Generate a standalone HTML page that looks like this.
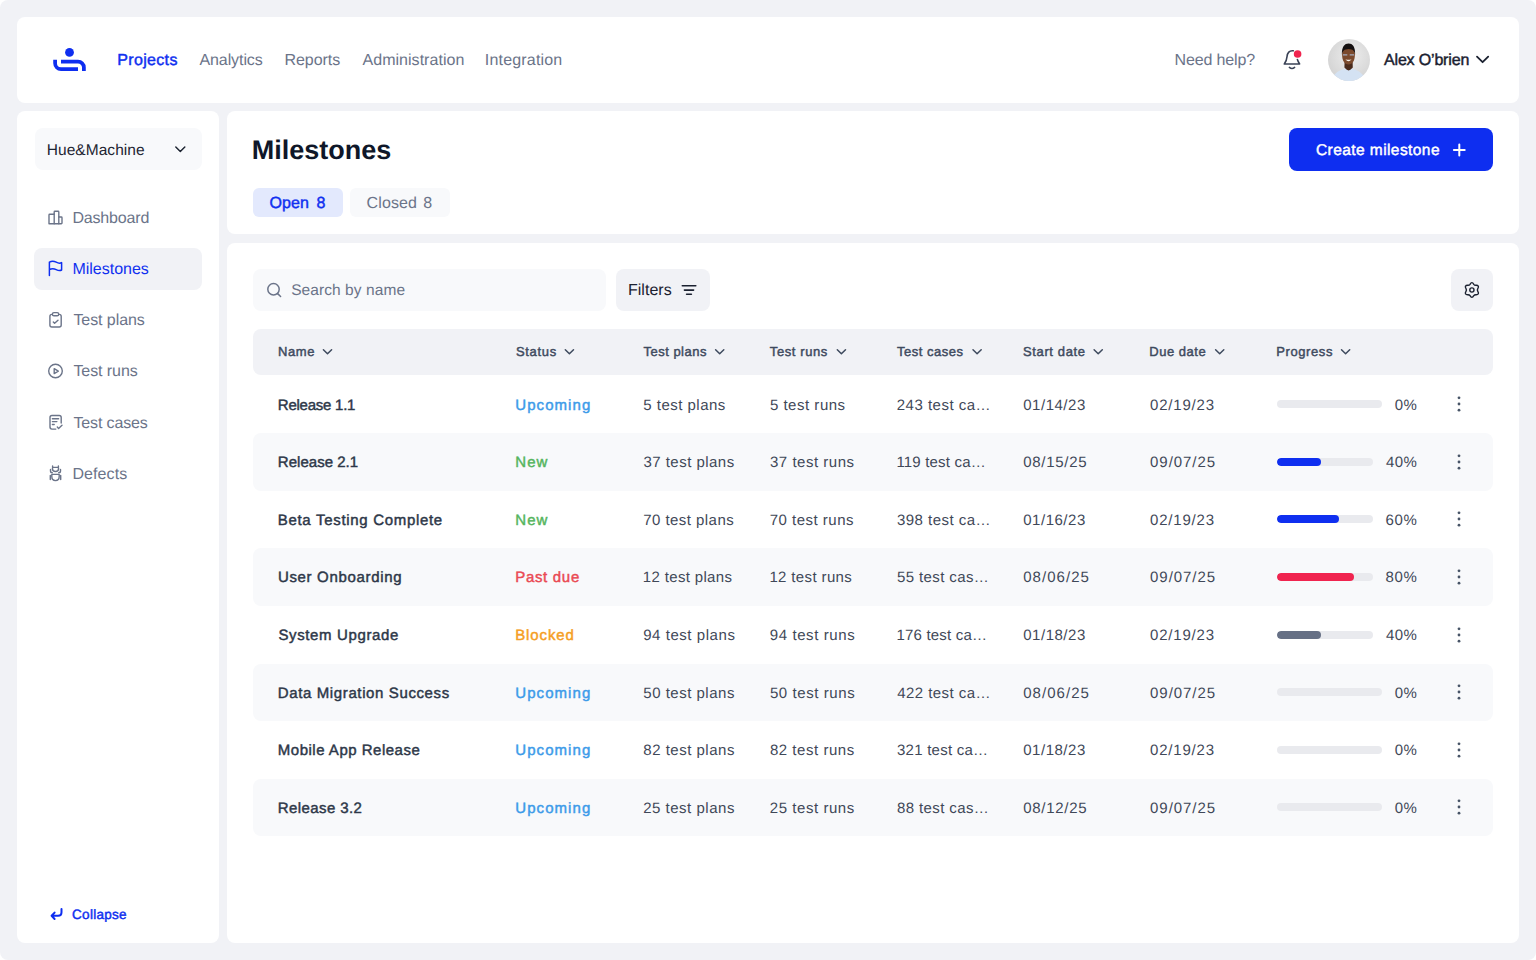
<!DOCTYPE html>
<html><head><meta charset="utf-8">
<style>
html,body{margin:0;padding:0;background:#ffffff;}
body{width:1536px;height:960px;position:relative;overflow:hidden;font-family:"Liberation Sans",sans-serif;}
.page{position:absolute;left:0;top:0;width:1536px;height:960px;background:#f1f2f6;border-radius:8px;overflow:hidden;}
.card{position:absolute;background:#ffffff;border-radius:8px;}
.t{position:absolute;white-space:pre;line-height:1;text-rendering:geometricPrecision;}
.box{position:absolute;border-radius:8px;}
.stripe{position:absolute;left:253px;width:1240px;height:57.6px;background:#f8f9fb;border-radius:8px;}
.track{position:absolute;left:1277.2px;height:8px;background:#e9eaee;border-radius:4px;overflow:hidden;}
.fill{height:8px;border-radius:4px;}
.kebab{position:absolute;left:1449.2px;fill:#475467;}
svg.ic{position:absolute;overflow:visible;}
</style></head>
<body>
<div class="page">
  <!-- header -->
  <div class="card" style="left:17px;top:17px;width:1502px;height:85.5px;"></div>
  <!-- sidebar -->
  <div class="card" style="left:17px;top:111px;width:201.7px;height:832px;"></div>
  <!-- main header -->
  <div class="card" style="left:226.7px;top:111px;width:1292.3px;height:123.4px;"></div>
  <!-- table card -->
  <div class="card" style="left:226.7px;top:243px;width:1292.3px;height:700px;"></div>

  <!-- project select -->
  <div class="box" style="left:34.7px;top:128.3px;width:167px;height:41.8px;background:#f8f9fb;"></div>
  <!-- selected nav -->
  <div class="box" style="left:34.3px;top:247.7px;width:167.4px;height:42.3px;background:#f1f2f6;"></div>
  <!-- tabs -->
  <div class="box" style="left:252.9px;top:187.9px;width:90.2px;height:29px;background:#e3e9fd;border-radius:6px;"></div>
  <div class="box" style="left:350.3px;top:187.9px;width:99.8px;height:29px;background:#f8f9fb;border-radius:6px;"></div>
  <!-- create button -->
  <div class="box" style="left:1288.7px;top:128.3px;width:204.1px;height:42.4px;background:#0e2ef0;"></div>
  <!-- search -->
  <div class="box" style="left:253px;top:268.9px;width:353.2px;height:42px;background:#f8f9fb;"></div>
  <!-- filters -->
  <div class="box" style="left:616.1px;top:269.3px;width:93.8px;height:41.5px;background:#f1f2f6;"></div>
  <!-- gear btn -->
  <div class="box" style="left:1451.3px;top:269px;width:41.7px;height:41.9px;background:#f1f2f6;"></div>
  <!-- table header -->
  <div class="box" style="left:253px;top:328.6px;width:1239.7px;height:46.2px;background:#f1f2f6;"></div>

<div class="track" style="top:400.20px;width:104.8px"></div>
<svg class="kebab" style="top:394.20px" width="20" height="20" viewBox="0 0 20 20"><circle cx="10" cy="3.8" r="1.4"/><circle cx="10" cy="10" r="1.4"/><circle cx="10" cy="16.2" r="1.4"/></svg>
<div class="stripe" style="top:433.20px"></div>
<div class="track" style="top:457.80px;width:96px"><div class="fill" style="width:43.6px;background:#0f2ff0"></div></div>
<svg class="kebab" style="top:451.80px" width="20" height="20" viewBox="0 0 20 20"><circle cx="10" cy="3.8" r="1.4"/><circle cx="10" cy="10" r="1.4"/><circle cx="10" cy="16.2" r="1.4"/></svg>
<div class="track" style="top:515.40px;width:96px"><div class="fill" style="width:61.6px;background:#0f2ff0"></div></div>
<svg class="kebab" style="top:509.40px" width="20" height="20" viewBox="0 0 20 20"><circle cx="10" cy="3.8" r="1.4"/><circle cx="10" cy="10" r="1.4"/><circle cx="10" cy="16.2" r="1.4"/></svg>
<div class="stripe" style="top:548.40px"></div>
<div class="track" style="top:573.00px;width:96px"><div class="fill" style="width:76.4px;background:#f0244f"></div></div>
<svg class="kebab" style="top:567.00px" width="20" height="20" viewBox="0 0 20 20"><circle cx="10" cy="3.8" r="1.4"/><circle cx="10" cy="10" r="1.4"/><circle cx="10" cy="16.2" r="1.4"/></svg>
<div class="track" style="top:630.60px;width:96px"><div class="fill" style="width:43.6px;background:#667085"></div></div>
<svg class="kebab" style="top:624.60px" width="20" height="20" viewBox="0 0 20 20"><circle cx="10" cy="3.8" r="1.4"/><circle cx="10" cy="10" r="1.4"/><circle cx="10" cy="16.2" r="1.4"/></svg>
<div class="stripe" style="top:663.60px"></div>
<div class="track" style="top:688.20px;width:104.8px"></div>
<svg class="kebab" style="top:682.20px" width="20" height="20" viewBox="0 0 20 20"><circle cx="10" cy="3.8" r="1.4"/><circle cx="10" cy="10" r="1.4"/><circle cx="10" cy="16.2" r="1.4"/></svg>
<div class="track" style="top:745.80px;width:104.8px"></div>
<svg class="kebab" style="top:739.80px" width="20" height="20" viewBox="0 0 20 20"><circle cx="10" cy="3.8" r="1.4"/><circle cx="10" cy="10" r="1.4"/><circle cx="10" cy="16.2" r="1.4"/></svg>
<div class="stripe" style="top:778.80px"></div>
<div class="track" style="top:803.40px;width:104.8px"></div>
<svg class="kebab" style="top:797.40px" width="20" height="20" viewBox="0 0 20 20"><circle cx="10" cy="3.8" r="1.4"/><circle cx="10" cy="10" r="1.4"/><circle cx="10" cy="16.2" r="1.4"/></svg>

<svg class="ic" style="left:0;top:0" width="1536" height="960" viewBox="0 0 1536 960" fill="none" stroke-linecap="round" stroke-linejoin="round">
  <!-- logo -->
  <g stroke="#0e2ef0" stroke-width="3.75" stroke-linecap="butt" stroke-linejoin="miter">
    <path d="M55.1,59.75 V63.2 A5.9,5.9 0 0 0 61,69.1 H78"/>
    <path d="M61,61.6 H78 A5.9,5.9 0 0 1 83.9,67.5 V71"/>
  </g>
  <circle cx="69.5" cy="52.4" r="4.4" fill="#0e2ef0"/>
  <!-- bell -->
  <g stroke="#3a4256" stroke-width="1.6">
    <path d="M1293.3,50.8 C1289.3,50.2 1287.3,53 1287,56.8 C1286.7,60.6 1285.6,62.3 1284.3,64 H1299.6 C1298.7,62.6 1297.9,61.2 1297.4,59.5"/>
    <path d="M1289.4,67.4 Q1292,69.6 1294.6,67.4"/>
  </g>
  <circle cx="1297.6" cy="54" r="3.8" fill="#f0244f"/>
  <!-- user chevron -->
  <path d="M1477,56.6 L1482.6,62.2 L1488.2,56.6" stroke="#1b2130" stroke-width="1.8"/>
  <!-- project chevron -->
  <path d="M175.8,147 L180.3,151.5 L184.8,147" stroke="#1f2633" stroke-width="1.5"/>
  <!-- sidebar icons -->
  <g stroke="#6b7489" stroke-width="1.4">
    <!-- dashboard -->
    <path d="M49,223.8 V215 Q49,214.3 49.7,214.3 H54.2 V212 Q54.2,211.3 54.9,211.3 H58.1 Q58.8,211.3 58.8,212 V217 H61.3 Q62,217 62,217.7 V223.1 Q62,223.8 61.3,223.8 H49.7 Q49,223.8 49,223.1 Z"/>
    <path d="M54.2,214.3 V223.8 M58.8,217 V223.8"/>
    <!-- clipboard -->
    <path d="M52.2,314.4 H51.9 C50.7,314.4 49.9,315.2 49.9,316.4 V325 C49.9,326.2 50.7,327 51.9,327 H59.2 C60.4,327 61.2,326.2 61.2,325 V316.4 C61.2,315.2 60.4,314.4 59.2,314.4 H58.9"/>
    <rect x="52.4" y="312.6" width="6.3" height="3.1" rx="1.55"/>
    <path d="M53.3,321.9 L54.6,323.3 L58,320.2"/>
    <!-- play -->
    <circle cx="55.5" cy="371" r="6.8"/>
    <path d="M54.2,368.6 L58.3,371.1 L54.2,373.6 Z"/>
    <!-- doc check -->
    <path d="M55.8,429.1 H52 C50.9,429.1 50,428.2 50,427.1 V417.5 C50,416.4 50.9,415.5 52,415.5 H59.2 C60.3,415.5 61.2,416.4 61.2,417.5 V423"/>
    <path d="M52.4,418.7 H58.6 M52.4,421.6 H56.9 M52.4,424.5 H54.2"/>
    <path d="M57.3,427.1 L58.6,428.4 L62,425.3"/>
    <!-- bug -->
    <path d="M52.6,466 V467.4 M58.4,466 V467.4"/>
    <path d="M53.4,467.4 H57.6 C58.2,467.4 58.6,467.8 58.6,468.4 C58.6,470.2 57.2,471.5 55.5,471.5 C53.8,471.5 52.4,470.2 52.4,468.4 C52.4,467.8 52.8,467.4 53.4,467.4 Z"/>
    <path d="M50.5,469.4 V471 C50.5,472 51.3,472.8 52.3,472.8 M60.5,469.4 V471 C60.5,472 59.7,472.8 58.7,472.8"/>
    <path d="M51.8,474.4 H59.2 V476.6 C59.2,479 57.6,480.6 55.5,480.6 C53.4,480.6 51.8,479 51.8,476.6 Z"/>
    <path d="M50.3,475.4 V479.6 M60.7,475.4 V479.6"/>
  </g>
  <!-- flag (active) -->
  <path d="M49.4,275.4 V262.2 C52,260.6 54.3,261.2 56.2,262.2 C58.1,263.2 60,263.6 61.6,262.6 V270 C60,271 58.1,270.6 56.2,269.6 C54.3,268.6 52,268.1 49.4,269.6" stroke="#0e2ef0" stroke-width="1.5"/>
  <!-- collapse -->
  <path d="M61.5,909 V912.3 C61.5,914.3 60,915.8 58,915.8 H52 M54.6,912.6 L51.6,915.8 L54.6,919" stroke="#0e2ef0" stroke-width="2"/>
  <!-- plus -->
  <path d="M1459.3,144.6 V155.4 M1453.9,150 H1464.7" stroke="#ffffff" stroke-width="2"/>
  <!-- search -->
  <circle cx="273.5" cy="289.3" r="5.7" stroke="#6b7489" stroke-width="1.5"/>
  <path d="M277.7,293.6 L280.6,296.5" stroke="#6b7489" stroke-width="1.5"/>
  <!-- filter -->
  <path d="M682.3,285.8 H695.8 M684.4,290.1 H693.6 M686.6,294.2 H691.4" stroke="#1b2130" stroke-width="1.6"/>
  <!-- gear -->
  <g stroke="#1b2130" stroke-width="1.4">
    <path d="M1471.9,282.6 C1472.8,282.6 1473.3,283.4 1473.8,284.3 C1474.3,285.1 1475.2,285.4 1476.2,285.3 C1477.2,285.3 1477.9,285.4 1478.3,286.2 C1478.8,287 1478.3,287.8 1477.8,288.6 C1477.3,289.4 1477.3,290.6 1477.8,291.4 C1478.3,292.2 1478.8,293 1478.3,293.8 C1477.9,294.6 1477.2,294.7 1476.2,294.7 C1475.2,294.6 1474.3,294.9 1473.8,295.7 C1473.3,296.6 1472.8,297.4 1471.9,297.4 C1471,297.4 1470.5,296.6 1470,295.7 C1469.5,294.9 1468.6,294.6 1467.6,294.7 C1466.6,294.7 1465.9,294.6 1465.5,293.8 C1465,293 1465.5,292.2 1466,291.4 C1466.5,290.6 1466.5,289.4 1466,288.6 C1465.5,287.8 1465,287 1465.5,286.2 C1465.9,285.4 1466.6,285.3 1467.6,285.3 C1468.6,285.4 1469.5,285.1 1470,284.3 C1470.5,283.4 1471,282.6 1471.9,282.6 Z"/>
    <circle cx="1471.9" cy="290" r="2.1"/>
  </g>
  <!-- header chevrons -->
  <g stroke="#3e4a5e" stroke-width="1.5">
    <path d="M323.4,349.7 L327.5,353.8 L331.6,349.7"/>
    <path d="M565.3,349.7 L569.4,353.8 L573.5,349.7"/>
    <path d="M715.6,349.7 L719.7,353.8 L723.8,349.7"/>
    <path d="M837.3,349.7 L841.4,353.8 L845.5,349.7"/>
    <path d="M973,349.7 L977.1,353.8 L981.2,349.7"/>
    <path d="M1094.1,349.7 L1098.2,353.8 L1102.3,349.7"/>
    <path d="M1215.6,349.7 L1219.7,353.8 L1223.8,349.7"/>
    <path d="M1341.5,349.7 L1345.6,353.8 L1349.7,349.7"/>
  </g>
</svg>
<!-- avatar -->
<svg class="ic" style="left:1328.4px;top:38.6px" width="42" height="42" viewBox="0 0 42 42">
  <defs>
    <radialGradient id="avbg" cx="55%" cy="40%" r="65%"><stop offset="0" stop-color="#ededed"/><stop offset="1" stop-color="#d2d2d2"/></radialGradient>
    <clipPath id="avc"><circle cx="21" cy="21" r="21"/></clipPath>
  </defs>
  <g clip-path="url(#avc)">
    <rect width="42" height="42" fill="url(#avbg)"/>
    <path d="M3,44 C4,36 9,32 16,30 C17.5,29.5 18.5,28.8 19,28 L20.6,31 L22.2,28 C22.8,28.8 23.8,29.5 25.2,30 C32,32 37,36 38,44 Z" fill="#d4e2f3"/>
    <path d="M16.6,23 L16.4,28.5 C17.8,30 19,31 20.6,31.5 C22.2,31 23.4,30 24.8,28.5 L24.6,23 Z" fill="#4a2a1b"/>
    <path d="M14.1,15.5 C14.1,10.5 16.8,8.6 20.5,8.6 C24.2,8.6 26.9,10.5 26.9,15.5 C26.9,21.8 24.5,25.4 20.5,25.4 C16.5,25.4 14.1,21.8 14.1,15.5 Z" fill="#7b4a2d"/>
    <path d="M13.9,15.8 C13.6,7.8 16.6,4.6 20.6,4.6 C24.6,4.6 27.4,7.8 27.1,15.8 C26.6,11.8 25,10.2 20.6,10 C16.2,10.2 14.5,11.8 13.9,15.8 Z" fill="#141010"/>
    <path d="M17.4,20.2 Q20.5,24.2 23.6,20.2 Q20.5,21.4 17.4,20.2 Z" fill="#f6f1ea"/>
    <path d="M15,15.9 H19.3 M21.7,15.9 H26" stroke="#a4acbf" stroke-width="1.3"/>
  </g>
</svg>


<span class="t" style="left:117.30px;top:53px;font-size:16px;color:#1030f0;-webkit-text-stroke:0.45px #1030f0;letter-spacing:0.329px;">Projects</span>
<span class="t" style="left:199.40px;top:53px;font-size:16px;color:#6b7489;letter-spacing:-0.078px;">Analytics</span>
<span class="t" style="left:284.50px;top:53px;font-size:16px;color:#6b7489;letter-spacing:-0.054px;">Reports</span>
<span class="t" style="left:362.50px;top:53px;font-size:16px;color:#6b7489;letter-spacing:0.033px;">Administration</span>
<span class="t" style="left:484.85px;top:53px;font-size:16px;color:#6b7489;letter-spacing:0.179px;">Integration</span>
<span class="t" style="left:1174.60px;top:53px;font-size:16px;color:#6b7489;letter-spacing:-0.138px;">Need help?</span>
<span class="t" style="left:1384.00px;top:53px;font-size:16px;color:#1b2130;-webkit-text-stroke:0.45px #1b2130;letter-spacing:-0.168px;">Alex O’brien</span>
<span class="t" style="left:46.70px;top:143px;font-size:15.5px;color:#1f2633;letter-spacing:0.063px;">Hue&amp;Machine</span>
<span class="t" style="left:72.40px;top:211px;font-size:16px;color:#6b7489;letter-spacing:-0.172px;">Dashboard</span>
<span class="t" style="left:72.40px;top:262px;font-size:16px;color:#1030f0;">Milestones</span>
<span class="t" style="left:73.40px;top:313px;font-size:16px;color:#6b7489;letter-spacing:-0.071px;">Test plans</span>
<span class="t" style="left:73.40px;top:364px;font-size:16px;color:#6b7489;letter-spacing:-0.064px;">Test runs</span>
<span class="t" style="left:73.40px;top:416px;font-size:16px;color:#6b7489;letter-spacing:-0.132px;">Test cases</span>
<span class="t" style="left:72.40px;top:467px;font-size:16px;color:#6b7489;letter-spacing:0.093px;">Defects</span>
<span class="t" style="left:72.10px;top:908px;font-size:13.5px;color:#1030f0;-webkit-text-stroke:0.45px #1030f0;letter-spacing:0.268px;">Collapse</span>
<span class="t" style="left:251.81px;top:137px;font-size:27px;color:#0f1729;font-weight:700;">Milestones</span>
<span class="t" style="left:269.50px;top:196px;font-size:16px;color:#1030f0;-webkit-text-stroke:0.45px #1030f0;letter-spacing:0.086px;">Open</span>
<span class="t" style="left:316.45px;top:196px;font-size:16px;color:#1030f0;-webkit-text-stroke:0.45px #1030f0;">8</span>
<span class="t" style="left:366.60px;top:196px;font-size:16px;color:#6b7489;letter-spacing:0.119px;">Closed</span>
<span class="t" style="left:423.20px;top:196px;font-size:16px;color:#6b7489;">8</span>
<span class="t" style="left:1316.00px;top:143px;font-size:15.5px;color:#ffffff;-webkit-text-stroke:0.45px #ffffff;letter-spacing:0.424px;">Create milestone</span>
<span class="t" style="left:291.15px;top:283px;font-size:15.5px;color:#6b7489;letter-spacing:0.077px;">Search by name</span>
<span class="t" style="left:627.90px;top:283px;font-size:16px;color:#1b2130;letter-spacing:0.041px;">Filters</span>
<span class="t" style="left:278.00px;top:345px;font-size:13px;color:#3e4a5e;-webkit-text-stroke:0.45px #3e4a5e;letter-spacing:0.584px;">Name</span>
<span class="t" style="left:515.90px;top:345px;font-size:13px;color:#3e4a5e;-webkit-text-stroke:0.45px #3e4a5e;letter-spacing:0.689px;">Status</span>
<span class="t" style="left:643.40px;top:345px;font-size:13px;color:#3e4a5e;-webkit-text-stroke:0.45px #3e4a5e;letter-spacing:0.508px;">Test plans</span>
<span class="t" style="left:769.80px;top:345px;font-size:13px;color:#3e4a5e;-webkit-text-stroke:0.45px #3e4a5e;letter-spacing:0.595px;">Test runs</span>
<span class="t" style="left:897.00px;top:345px;font-size:13px;color:#3e4a5e;-webkit-text-stroke:0.45px #3e4a5e;letter-spacing:0.498px;">Test cases</span>
<span class="t" style="left:1023.10px;top:345px;font-size:13px;color:#3e4a5e;-webkit-text-stroke:0.45px #3e4a5e;letter-spacing:0.607px;">Start date</span>
<span class="t" style="left:1149.30px;top:345px;font-size:13px;color:#3e4a5e;-webkit-text-stroke:0.45px #3e4a5e;letter-spacing:0.524px;">Due date</span>
<span class="t" style="left:1276.20px;top:345px;font-size:13px;color:#3e4a5e;-webkit-text-stroke:0.45px #3e4a5e;letter-spacing:0.597px;">Progress</span>
<span class="t" style="left:277.80px;top:398px;font-size:15px;color:#2d3748;-webkit-text-stroke:0.45px #2d3748;letter-spacing:-0.241px;">Release 1.1</span>
<span class="t" style="left:515.30px;top:398px;font-size:15px;color:#3d9be9;-webkit-text-stroke:0.45px #3d9be9;letter-spacing:1.059px;">Upcoming</span>
<span class="t" style="left:643.30px;top:398px;font-size:15px;color:#3f4858;letter-spacing:0.481px;">5 test plans</span>
<span class="t" style="left:769.90px;top:398px;font-size:15px;color:#3f4858;letter-spacing:0.517px;">5 test runs</span>
<span class="t" style="left:896.80px;top:398px;font-size:15px;color:#3f4858;letter-spacing:0.484px;">243 test ca…</span>
<span class="t" style="left:1023.25px;top:398px;font-size:15px;color:#3f4858;letter-spacing:0.515px;">01/14/23</span>
<span class="t" style="left:1150.10px;top:398px;font-size:15px;color:#3f4858;letter-spacing:0.793px;">02/19/23</span>
<span class="t" style="left:1394.76px;top:398px;font-size:15px;color:#3f4858;letter-spacing:0.400px;">0%</span>
<span class="t" style="left:277.80px;top:455px;font-size:15px;color:#2d3748;-webkit-text-stroke:0.45px #2d3748;letter-spacing:0.029px;">Release 2.1</span>
<span class="t" style="left:515.20px;top:455px;font-size:15px;color:#55b55e;-webkit-text-stroke:0.45px #55b55e;letter-spacing:1.113px;">New</span>
<span class="t" style="left:643.40px;top:455px;font-size:15px;color:#3f4858;letter-spacing:0.479px;">37 test plans</span>
<span class="t" style="left:770.00px;top:455px;font-size:15px;color:#3f4858;letter-spacing:0.511px;">37 test runs</span>
<span class="t" style="left:896.40px;top:455px;font-size:15px;color:#3f4858;letter-spacing:0.185px;">119 test ca…</span>
<span class="t" style="left:1023.25px;top:455px;font-size:15px;color:#3f4858;letter-spacing:0.715px;">08/15/25</span>
<span class="t" style="left:1150.10px;top:455px;font-size:15px;color:#3f4858;letter-spacing:0.936px;">09/07/25</span>
<span class="t" style="left:1385.90px;top:455px;font-size:15px;color:#3f4858;letter-spacing:0.458px;">40%</span>
<span class="t" style="left:277.80px;top:513px;font-size:15px;color:#2d3748;-webkit-text-stroke:0.45px #2d3748;letter-spacing:0.686px;">Beta Testing Complete</span>
<span class="t" style="left:515.20px;top:513px;font-size:15px;color:#55b55e;-webkit-text-stroke:0.45px #55b55e;letter-spacing:1.113px;">New</span>
<span class="t" style="left:643.20px;top:513px;font-size:15px;color:#3f4858;letter-spacing:0.454px;">70 test plans</span>
<span class="t" style="left:769.80px;top:513px;font-size:15px;color:#3f4858;letter-spacing:0.484px;">70 test runs</span>
<span class="t" style="left:897.00px;top:513px;font-size:15px;color:#3f4858;letter-spacing:0.465px;">398 test ca…</span>
<span class="t" style="left:1023.25px;top:513px;font-size:15px;color:#3f4858;letter-spacing:0.515px;">01/16/23</span>
<span class="t" style="left:1150.10px;top:513px;font-size:15px;color:#3f4858;letter-spacing:0.793px;">02/19/23</span>
<span class="t" style="left:1385.50px;top:513px;font-size:15px;color:#3f4858;letter-spacing:0.658px;">60%</span>
<span class="t" style="left:277.90px;top:570px;font-size:15px;color:#2d3748;-webkit-text-stroke:0.45px #2d3748;letter-spacing:0.672px;">User Onboarding</span>
<span class="t" style="left:515.20px;top:570px;font-size:15px;color:#ea4a53;-webkit-text-stroke:0.45px #ea4a53;letter-spacing:0.690px;">Past due</span>
<span class="t" style="left:642.80px;top:570px;font-size:15px;color:#3f4858;letter-spacing:0.345px;">12 test plans</span>
<span class="t" style="left:769.40px;top:570px;font-size:15px;color:#3f4858;letter-spacing:0.366px;">12 test runs</span>
<span class="t" style="left:896.90px;top:570px;font-size:15px;color:#3f4858;letter-spacing:0.396px;">55 test cas…</span>
<span class="t" style="left:1023.25px;top:570px;font-size:15px;color:#3f4858;letter-spacing:1.029px;">08/06/25</span>
<span class="t" style="left:1150.10px;top:570px;font-size:15px;color:#3f4858;letter-spacing:0.936px;">09/07/25</span>
<span class="t" style="left:1385.60px;top:570px;font-size:15px;color:#3f4858;letter-spacing:0.608px;">80%</span>
<span class="t" style="left:278.40px;top:628px;font-size:15px;color:#2d3748;-webkit-text-stroke:0.45px #2d3748;letter-spacing:0.640px;">System Upgrade</span>
<span class="t" style="left:515.20px;top:628px;font-size:15px;color:#f59e23;-webkit-text-stroke:0.45px #f59e23;letter-spacing:0.880px;">Blocked</span>
<span class="t" style="left:643.20px;top:628px;font-size:15px;color:#3f4858;letter-spacing:0.554px;">94 test plans</span>
<span class="t" style="left:769.80px;top:628px;font-size:15px;color:#3f4858;letter-spacing:0.593px;">94 test runs</span>
<span class="t" style="left:896.40px;top:628px;font-size:15px;color:#3f4858;letter-spacing:0.211px;">176 test ca…</span>
<span class="t" style="left:1023.25px;top:628px;font-size:15px;color:#3f4858;letter-spacing:0.515px;">01/18/23</span>
<span class="t" style="left:1150.10px;top:628px;font-size:15px;color:#3f4858;letter-spacing:0.793px;">02/19/23</span>
<span class="t" style="left:1385.90px;top:628px;font-size:15px;color:#3f4858;letter-spacing:0.458px;">40%</span>
<span class="t" style="left:277.80px;top:686px;font-size:15px;color:#2d3748;-webkit-text-stroke:0.45px #2d3748;letter-spacing:0.619px;">Data Migration Success</span>
<span class="t" style="left:515.30px;top:686px;font-size:15px;color:#3d9be9;-webkit-text-stroke:0.45px #3d9be9;letter-spacing:1.059px;">Upcoming</span>
<span class="t" style="left:643.30px;top:686px;font-size:15px;color:#3f4858;letter-spacing:0.504px;">50 test plans</span>
<span class="t" style="left:769.90px;top:686px;font-size:15px;color:#3f4858;letter-spacing:0.584px;">50 test runs</span>
<span class="t" style="left:897.20px;top:686px;font-size:15px;color:#3f4858;letter-spacing:0.447px;">422 test ca…</span>
<span class="t" style="left:1023.25px;top:686px;font-size:15px;color:#3f4858;letter-spacing:1.029px;">08/06/25</span>
<span class="t" style="left:1150.10px;top:686px;font-size:15px;color:#3f4858;letter-spacing:0.936px;">09/07/25</span>
<span class="t" style="left:1394.76px;top:686px;font-size:15px;color:#3f4858;letter-spacing:0.400px;">0%</span>
<span class="t" style="left:277.80px;top:743px;font-size:15px;color:#2d3748;-webkit-text-stroke:0.45px #2d3748;letter-spacing:0.506px;">Mobile App Release</span>
<span class="t" style="left:515.30px;top:743px;font-size:15px;color:#3d9be9;-webkit-text-stroke:0.45px #3d9be9;letter-spacing:1.059px;">Upcoming</span>
<span class="t" style="left:643.30px;top:743px;font-size:15px;color:#3f4858;letter-spacing:0.504px;">82 test plans</span>
<span class="t" style="left:769.90px;top:743px;font-size:15px;color:#3f4858;letter-spacing:0.539px;">82 test runs</span>
<span class="t" style="left:897.00px;top:743px;font-size:15px;color:#3f4858;letter-spacing:0.247px;">321 test ca…</span>
<span class="t" style="left:1023.25px;top:743px;font-size:15px;color:#3f4858;letter-spacing:0.515px;">01/18/23</span>
<span class="t" style="left:1150.10px;top:743px;font-size:15px;color:#3f4858;letter-spacing:0.793px;">02/19/23</span>
<span class="t" style="left:1394.76px;top:743px;font-size:15px;color:#3f4858;letter-spacing:0.400px;">0%</span>
<span class="t" style="left:277.80px;top:801px;font-size:15px;color:#2d3748;-webkit-text-stroke:0.45px #2d3748;letter-spacing:0.409px;">Release 3.2</span>
<span class="t" style="left:515.30px;top:801px;font-size:15px;color:#3d9be9;-webkit-text-stroke:0.45px #3d9be9;letter-spacing:1.059px;">Upcoming</span>
<span class="t" style="left:643.20px;top:801px;font-size:15px;color:#3f4858;letter-spacing:0.512px;">25 test plans</span>
<span class="t" style="left:769.80px;top:801px;font-size:15px;color:#3f4858;letter-spacing:0.548px;">25 test runs</span>
<span class="t" style="left:896.90px;top:801px;font-size:15px;color:#3f4858;letter-spacing:0.396px;">88 test cas…</span>
<span class="t" style="left:1023.25px;top:801px;font-size:15px;color:#3f4858;letter-spacing:0.715px;">08/12/25</span>
<span class="t" style="left:1150.10px;top:801px;font-size:15px;color:#3f4858;letter-spacing:0.936px;">09/07/25</span>
<span class="t" style="left:1394.76px;top:801px;font-size:15px;color:#3f4858;letter-spacing:0.400px;">0%</span>
</div>
</body></html>
